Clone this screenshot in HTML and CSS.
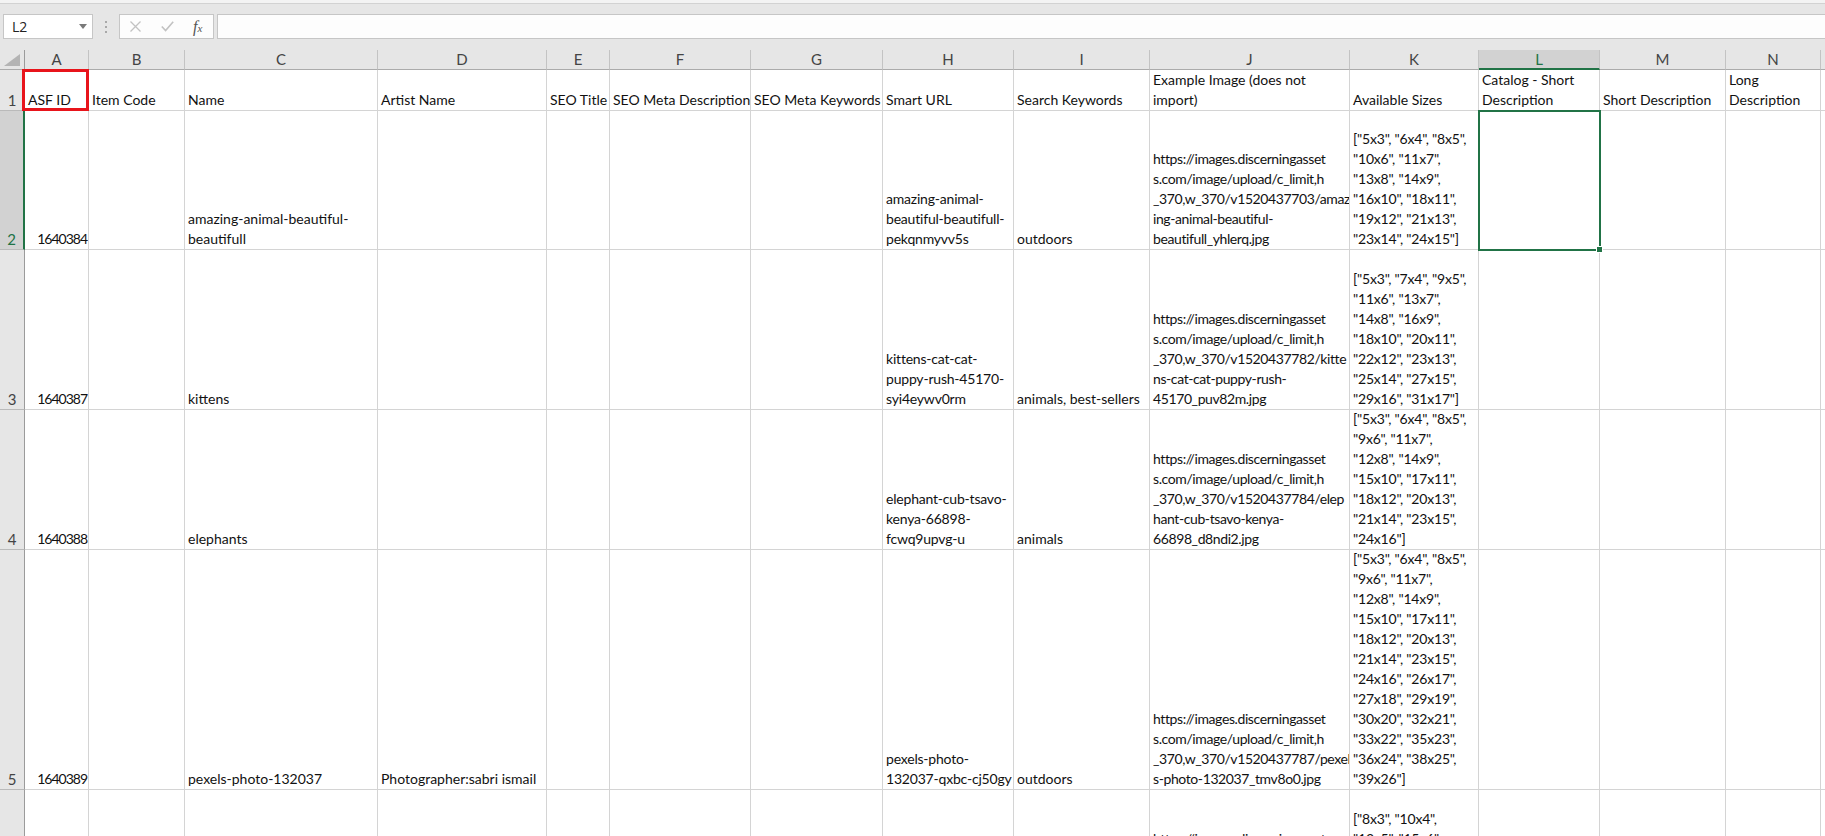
FILE: index.html
```html
<!DOCTYPE html>
<html lang="en">
<head>
    <meta charset="UTF-8">
    <title>Product import sheet</title>
    <link rel="stylesheet" href="styles.css">
</head>
<body>
<div class="app">
    <div class="ribbon-edge"></div>
    <div class="formula-bar">
        <div class="name-box">
            <span>L2</span>
            <svg class="caret" width="8" height="5" viewBox="0 0 8 5"><path d="M0 0h8L4 5z" fill="#7a7a7a"/></svg>
        </div>
        <div class="grip"><i></i><i></i><i></i></div>
        <div class="fx-buttons">
            <svg width="11" height="11" viewBox="0 0 11 11"><path d="M0.5 0.5l10 10M10.5 0.5l-10 10" stroke="#c2c2c2" stroke-width="1.3" fill="none"/></svg>
            <svg width="13" height="11" viewBox="0 0 13 11"><path d="M0.8 5.5l3.8 4L12.2 0.8" stroke="#c2c2c2" stroke-width="1.6" fill="none"/></svg>
            <span class="fx">f<sub>x</sub></span>
        </div>
        <div class="formula-input"></div>
    </div>

    <div class="sheet">
        <!-- column headers -->
        <div class="corner"><svg width="16" height="12" viewBox="0 0 16 12"><path d="M16 0v12H0z" fill="#b4b4b4"/></svg></div>
        <div class="colhead">A</div>
        <div class="colhead">B</div>
        <div class="colhead">C</div>
        <div class="colhead">D</div>
        <div class="colhead">E</div>
        <div class="colhead">F</div>
        <div class="colhead">G</div>
        <div class="colhead">H</div>
        <div class="colhead">I</div>
        <div class="colhead">J</div>
        <div class="colhead">K</div>
        <div class="colhead active">L</div>
        <div class="colhead">M</div>
        <div class="colhead">N</div>
        <div class="colhead"></div>

        <!-- row 1 -->
        <div class="rowhead">1</div>
        <div class="cell">ASF ID</div>
        <div class="cell">Item Code</div>
        <div class="cell">Name</div>
        <div class="cell">Artist Name</div>
        <div class="cell">SEO Title</div>
        <div class="cell">SEO Meta Description</div>
        <div class="cell">SEO Meta Keywords</div>
        <div class="cell">Smart URL</div>
        <div class="cell">Search Keywords</div>
        <div class="cell">Example Image (does not<br>import)</div>
        <div class="cell">Available Sizes</div>
        <div class="cell">Catalog - Short<br>Description</div>
        <div class="cell">Short Description</div>
        <div class="cell">Long<br>Description</div>
        <div class="cell"></div>

        <!-- row 2 -->
        <div class="rowhead active">2</div>
        <div class="cell num">1640384</div>
        <div class="cell"></div>
        <div class="cell">amazing-animal-beautiful-<br>beautifull</div>
        <div class="cell"></div>
        <div class="cell"></div>
        <div class="cell"></div>
        <div class="cell"></div>
        <div class="cell slug">amazing-animal-<br>beautiful-beautifull-<br>pekqnmyvv5s</div>
        <div class="cell">outdoors</div>
        <div class="cell url">https://images.discerningasset<br>s.com/image/upload/c_limit,h<br>_370,w_370/v1520437703/amaz<br>ing-animal-beautiful-<br>beautifull_yhlerq.jpg</div>
        <div class="cell sizes">["5x3", "6x4", "8x5",<br>"10x6", "11x7",<br>"13x8", "14x9",<br>"16x10", "18x11",<br>"19x12", "21x13",<br>"23x14", "24x15"]</div>
        <div class="cell selected"><span class="handle"></span></div>
        <div class="cell"></div>
        <div class="cell"></div>
        <div class="cell"></div>

        <!-- row 3 -->
        <div class="rowhead">3</div>
        <div class="cell num">1640387</div>
        <div class="cell"></div>
        <div class="cell">kittens</div>
        <div class="cell"></div>
        <div class="cell"></div>
        <div class="cell"></div>
        <div class="cell"></div>
        <div class="cell slug">kittens-cat-cat-<br>puppy-rush-45170-<br>syi4eywv0rm</div>
        <div class="cell">animals, best-sellers</div>
        <div class="cell url">https://images.discerningasset<br>s.com/image/upload/c_limit,h<br>_370,w_370/v1520437782/kitte<br>ns-cat-cat-puppy-rush-<br>45170_puv82m.jpg</div>
        <div class="cell sizes">["5x3", "7x4", "9x5",<br>"11x6", "13x7",<br>"14x8", "16x9",<br>"18x10", "20x11",<br>"22x12", "23x13",<br>"25x14", "27x15",<br>"29x16", "31x17"]</div>
        <div class="cell"></div>
        <div class="cell"></div>
        <div class="cell"></div>
        <div class="cell"></div>

        <!-- row 4 -->
        <div class="rowhead">4</div>
        <div class="cell num">1640388</div>
        <div class="cell"></div>
        <div class="cell">elephants</div>
        <div class="cell"></div>
        <div class="cell"></div>
        <div class="cell"></div>
        <div class="cell"></div>
        <div class="cell slug">elephant-cub-tsavo-<br>kenya-66898-<br>fcwq9upvg-u</div>
        <div class="cell">animals</div>
        <div class="cell url">https://images.discerningasset<br>s.com/image/upload/c_limit,h<br>_370,w_370/v1520437784/elep<br>hant-cub-tsavo-kenya-<br>66898_d8ndi2.jpg</div>
        <div class="cell sizes">["5x3", "6x4", "8x5",<br>"9x6", "11x7",<br>"12x8", "14x9",<br>"15x10", "17x11",<br>"18x12", "20x13",<br>"21x14", "23x15",<br>"24x16"]</div>
        <div class="cell"></div>
        <div class="cell"></div>
        <div class="cell"></div>
        <div class="cell"></div>

        <!-- row 5 -->
        <div class="rowhead">5</div>
        <div class="cell num">1640389</div>
        <div class="cell"></div>
        <div class="cell">pexels-photo-132037</div>
        <div class="cell">Photographer:sabri ismail</div>
        <div class="cell"></div>
        <div class="cell"></div>
        <div class="cell"></div>
        <div class="cell slug">pexels-photo-<br>132037-qxbc-cj50gy</div>
        <div class="cell">outdoors</div>
        <div class="cell url">https://images.discerningasset<br>s.com/image/upload/c_limit,h<br>_370,w_370/v1520437787/pexel<br>s-photo-132037_tmv8o0.jpg</div>
        <div class="cell sizes">["5x3", "6x4", "8x5",<br>"9x6", "11x7",<br>"12x8", "14x9",<br>"15x10", "17x11",<br>"18x12", "20x13",<br>"21x14", "23x15",<br>"24x16", "26x17",<br>"27x18", "29x19",<br>"30x20", "32x21",<br>"33x22", "35x23",<br>"36x24", "38x25",<br>"39x26"]</div>
        <div class="cell"></div>
        <div class="cell"></div>
        <div class="cell"></div>
        <div class="cell"></div>

        <!-- row 6 (only the top of it is on screen) -->
        <div class="rowhead"></div>
        <div class="cell"></div>
        <div class="cell"></div>
        <div class="cell"></div>
        <div class="cell"></div>
        <div class="cell"></div>
        <div class="cell"></div>
        <div class="cell"></div>
        <div class="cell"></div>
        <div class="cell"></div>
        <div class="cell url">https://images.discerningasset<br>s.com/image/upload/c_limit,h<br>_370,w_370/v1520437790/wildl<br>ife-lion-predator-<br>x7f2k_k2p9d1.jpg</div>
        <div class="cell sizes">["8x3", "10x4",<br>"13x5", "15x6",<br>"18x7", "21x8",<br>"23x9", "26x10",<br>"29x11", "31x12",<br>"34x13", "37x14"]</div>
        <div class="cell"></div>
        <div class="cell"></div>
        <div class="cell"></div>
        <div class="cell"></div>

        <div class="callout"></div>
    </div>
</div>
</body>
</html>
```

FILE: styles.css
```css
body {
    margin: 0;
    background-color: #e6e6e6;
    overflow: hidden;
    font-family: Lato, "Liberation Sans", sans-serif;
}
.app {
    width: 1825px;
    height: 836px;
    overflow: hidden;
}
.ribbon-edge {
    height: 3px;
    background-color: #f3f3f3;
    border-bottom: 1px solid #d2d2d2;
}
.formula-bar {
    display: flex;
    align-items: center;
    height: 25px;
    margin-top: 10px;
    padding-left: 3px;
}
.name-box {
    display: flex;
    align-items: center;
    justify-content: space-between;
    box-sizing: border-box;
    width: 90px;
    height: 25px;
    padding: 0 5px 0 8px;
    background-color: #fff;
    border: 1px solid #c6c6c6;
    font-family: "Open Sans", sans-serif;
    font-size: 14px;
    color: #222;
}
.grip {
    display: flex;
    flex-direction: column;
    gap: 3px;
    width: 26px;
    align-items: center;
}
.grip i {
    width: 2px;
    height: 2px;
    background-color: #a8a8a8;
}
.fx-buttons {
    display: flex;
    align-items: center;
    box-sizing: border-box;
    width: 95px;
    height: 25px;
    padding-left: 10px;
    gap: 20px;
    background-color: #fdfdfd;
    border: 1px solid #c6c6c6;
}
.fx {
    font-family: "Liberation Serif", serif;
    font-style: italic;
    font-size: 16px;
    color: #555;
    margin-left: -1px;
}
.fx sub {
    font-size: 11px;
    vertical-align: 0;
}
.formula-input {
    flex: 1;
    height: 25px;
    box-sizing: border-box;
    margin-left: 3px;
    background-color: #fdfdfd;
    border: 1px solid #c6c6c6;
    border-right: 0;
}

/* grid */
.sheet {
    position: relative;
    margin-top: 11px;
    display: grid;
    grid-template-columns: 25px 64px 96px 193px 169px 63px 141px 132px 131px 136px 200px 129px 121px 126px 95px 1fr;
    grid-template-rows: 20px 41px 139px 160px 140px 240px 140px;
    background-color: #fff;
    font-size: 14px;
    line-height: 20px;
    color: #111;
}
.corner,
.colhead {
    box-sizing: border-box;
    background-color: #e6e6e6;
    border-right: 1px solid #c3c3c3;
    border-bottom: 1px solid #ababab;
    text-align: center;
    font-size: 15px;
    line-height: 19px;
    color: #444;
}
.corner {
    display: flex;
    justify-content: flex-end;
    align-items: flex-end;
    padding: 0 4px 3px 0;
    border-right-color: #9b9b9b;
}
.colhead.active {
    background-color: #d2d2d2;
    border-bottom: 2px solid #217346;
    color: #217346;
}
.rowhead {
    box-sizing: border-box;
    display: flex;
    align-items: flex-end;
    justify-content: center;
    background-color: #e6e6e6;
    border-right: 1px solid #9b9b9b;
    border-bottom: 1px solid #bababa;
    font-size: 15px;
    color: #444;
    overflow: hidden;
}
.rowhead.active {
    background-color: #d2d2d2;
    border-right: 2px solid #217346;
    color: #217346;
}
.cell {
    box-sizing: border-box;
    display: flex;
    align-items: flex-end;
    padding: 0 2px 0 3px;
    border-right: 1px solid #d4d4d4;
    border-bottom: 1px solid #d4d4d4;
    white-space: nowrap;
    overflow: hidden;
}
.cell.num {
    justify-content: flex-end;
    letter-spacing: -1px;
    padding-right: 1px;
}
.cell.url {
    letter-spacing: -0.4px;
}
.cell.slug {
    letter-spacing: -0.2px;
}
.cell.sizes {
    letter-spacing: -0.2px;
}
.cell.selected {
    position: relative;
    overflow: visible;
    outline: 2px solid #217346;
    outline-offset: -1px;
    z-index: 1;
}
.handle {
    position: absolute;
    right: -4px;
    bottom: -4px;
    width: 5px;
    height: 5px;
    background-color: #217346;
    border: 1px solid #fff;
}
.callout {
    position: absolute;
    left: 22px;
    top: 19px;
    width: 67px;
    height: 42px;
    box-sizing: border-box;
    border: 3px solid #e8141b;
    pointer-events: none;
}
```
